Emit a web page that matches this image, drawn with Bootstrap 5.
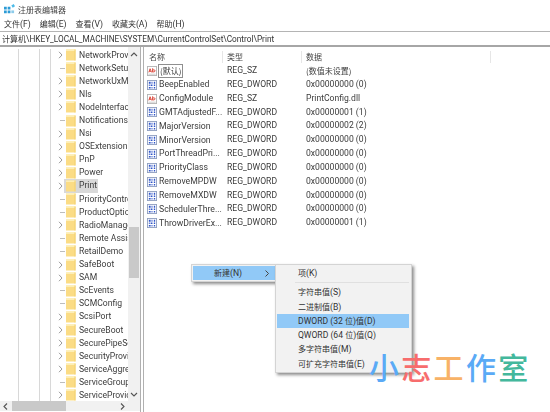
<!DOCTYPE html>
<html lang="zh"><head><meta charset="utf-8"><title>注册表编辑器</title>
<link href="https://cdn.jsdelivr.net/npm/bootstrap@5.3.0/dist/css/bootstrap.min.css" rel="stylesheet">
<style>
html,body{width:550px;height:412px;overflow:hidden;background:#fff}
body{font-family:Roboto,"Noto Sans CJK SC",sans-serif;font-size:8.6px;line-height:13px;color:#333;position:relative}
.zh{font-family:"Noto Sans CJK SC",sans-serif;font-size:8px}
.win-shell{width:550px;height:412px;filter:blur(.3px)}
.title-row{height:18px;padding:1px 0 0 4px;gap:3px;color:#444}
.menu-row{height:14px;padding:1px 0 0 4px;gap:9px;margin-top:-1px;color:#333}
.addr-row{height:16px;margin-top:1px;border-top:1px solid #b4b4b4;border-bottom:2px solid #a6a6a6;padding-left:2px;padding-top:1px;font-size:8.25px;line-height:12px;white-space:nowrap;overflow:hidden;color:#333}
.main-row{height:365px}
.tree-pane{width:141px;height:365px;border-right:1px solid #b0b0b0}
.tree-body{height:354px}
.tree-view{width:129px;overflow:hidden;padding-top:1.5px}
.guide-a{width:19px;border-right:1px solid #d8d8d8;flex:none}
.guide-b{width:21px;border-right:1px solid #d8d8d8;flex:none}
.guide-c{width:11px;border-right:1px solid #d8d8d8;flex:none}
.tree-list{width:78px;flex:none;overflow:hidden}
.tree-item{height:13.1px;white-space:nowrap;line-height:13px;color:#3c3c3c;font-size:8.6px}
.tw{width:15px;flex:none;justify-content:center;align-items:center;display:flex;padding-left:4px}
.tw svg{display:block;flex:none}
.stub{width:5px;height:1px;background:#bdbdbd;margin-left:3px}
.fold{flex:none;margin-right:3px}
.tree-item.sel{background:linear-gradient(90deg,transparent 13px,#d9d9d9 13px,#d9d9d9 47px,transparent 47px)}
.vbar{width:12px;background:#f1f1f1;flex:none;position:relative}
.v-thumb{position:absolute;left:1px;right:1px;top:180px;height:51px;background:#c9c9c9}
.v-up{position:absolute;left:2px;top:5px}.v-down{position:absolute;left:2px;bottom:4px}
.hbar{height:10px;background:#f1f1f1;padding:0 0 0 12px;position:relative}
.h-thumb{width:54px;background:#c9c9c9}
.h-left{position:absolute;left:3px;top:2px}.h-right{position:absolute;right:15px;top:2px}
.list-pane{margin-left:2px;border-left:1px solid #b0b0b0;flex:1}
.hdr-row{height:17px;padding-top:4px}
.hd{flex:none;padding-left:4px;border-right:1px solid #e6e6e6;height:12px;color:#444;line-height:12px}
.c-name{width:79px;padding-left:5px}.c-type{width:79px}.c-data{width:189px}
.val-row{height:13.85px;white-space:nowrap;line-height:13px;color:#3c3c3c}
.nm{width:83px;flex:none;padding-left:3px;gap:2px;align-items:center;display:flex;font-size:8.7px}
.nm svg{flex:none}
.tp{width:79px;flex:none}
.edit-box{border:1px solid #8f8f8f;padding:0 1px;line-height:11px;margin-left:-1px;background:#fff}
.pop-one,.pop-two{position:absolute;background:#f2f2f2;border:1px solid #d4d4d4;box-shadow:2px 2px 3px rgba(0,0,0,.45);color:#333}
.pop-one{left:191px;top:264px;width:85px;height:18px;padding:1px 0 1px 1px}
.pop-hot{background:#91c9f7;height:14px;padding:0 6px 0 21px;line-height:14px}
.pop-two{left:275px;top:264px;width:137px;height:109px;padding:0 2px 0 1px}
.pop-row{height:14.3px;padding-left:21px;line-height:14px;white-space:nowrap}
.pop-row.hot{background:#91c9f7}
.pop-gap{height:1px;background:#e0e0e0;margin:2px 0 2px 18px}
.pop-first{margin-top:1px}
.mark-text{position:absolute;left:369px;top:347px;display:flex;gap:2.3px;font:500 30px/38px "Noto Sans CJK SC",sans-serif}
.wm-blue{color:#5aaaf6}.wm-red{color:#f76d6d}.wm-orange{color:#f8b267}.wm-green{color:#43b89c}
</style></head><body>
<svg width="0" height="0" class="d-block" style="position:absolute"><defs>
<symbol id="fo" viewBox="0 0 10 12"><path d="M0 .5h9.500v11H0z" fill="#fbdc85"/><path d="M0 .5h9.500v1.500H0z" fill="#fdeeb5"/><path d="M8.500.5h1v11h-1z" fill="#f1cf70"/></symbol>
<symbol id="ch" viewBox="0 0 5 8"><path d="M1 .8 4 4 1 7.200" fill="none" stroke="#9a9a9a" stroke-width="1"/></symbol>
<symbol id="ab" viewBox="0 0 11 11"><rect x=".5" y=".5" width="10" height="10" fill="#fff" stroke="#b4b4b4"/><path d="M2 7l1.400-4L5 7M2.500 5.800h2" fill="none" stroke="#d83c2e"/><path d="M6.200 2.500V7M6.200 5c.4-1.200 2.600-1.200 2.600.3S6.600 6.800 6.200 5.800" fill="none" stroke="#d83c2e"/><path d="M1.500 9h8" stroke="#c8c8c8"/></symbol>
<symbol id="bi" viewBox="0 0 11 11"><rect x=".5" y=".5" width="10" height="10" fill="#fff" stroke="#8f9fc0"/><path d="M2 2h2v2H2zM5 2h1v2H5zM7.500 2h1.500v2H7.500zM2 5h1v1.500H2zM4 5h2v1.500H4zM7.500 5h1.500v1.500H7.500zM2 7.800h2v1.500H2zM5 7.800h1v1.500H5zM7.500 7.800h1.500v1.500H7.500z" fill="#2f55c8"/></symbol>
<symbol id="app" viewBox="0 0 12 12"><path d="M0 3h3v3H0zM0 7h3v3H0zM4 3h3v3H4zM4 7h3v3H4z" fill="#2c9bd6"/><path d="M8 1.500 10.500 0 12 2.500 9.500 4z" fill="#4dbbe8"/><path d="M8 7h3v3H8z" fill="#8ccbea"/></symbol>
</defs></svg>
<div class="win-shell d-flex flex-column">
 <div class="title-row d-flex align-items-center"><svg width="11" height="11"><use href="#app"/></svg><span class="zh">注册表编辑器</span></div>
 <div class="menu-row d-flex align-items-center"><span><span class="zh">文件</span>(F)</span><span><span class="zh">编辑</span>(E)</span><span><span class="zh">查看</span>(V)</span><span><span class="zh">收藏夹</span>(A)</span><span><span class="zh">帮助</span>(H)</span></div>
 <div class="addr-row"><span class="zh">计算机</span>\HKEY_LOCAL_MACHINE\SYSTEM\CurrentControlSet\Control\Print</div>
 <div class="main-row d-flex">
  <div class="tree-pane d-flex flex-column">
   <div class="tree-body d-flex">
    <div class="tree-view d-flex">
     <div class="guide-a"></div><div class="guide-b"></div><div class="guide-c"></div>
     <div class="tree-list">
<div class="tree-item d-flex align-items-center"><span class="tw"><svg width="5" height="8"><use href="#ch"/></svg></span><svg class="fold" width="10" height="12"><use href="#fo"/></svg>NetworkProvider</div>
<div class="tree-item d-flex align-items-center"><span class="tw"><i class="stub"></i></span><svg class="fold" width="10" height="12"><use href="#fo"/></svg>NetworkSetup2</div>
<div class="tree-item d-flex align-items-center"><span class="tw"><svg width="5" height="8"><use href="#ch"/></svg></span><svg class="fold" width="10" height="12"><use href="#fo"/></svg>NetworkUxManager</div>
<div class="tree-item d-flex align-items-center"><span class="tw"><svg width="5" height="8"><use href="#ch"/></svg></span><svg class="fold" width="10" height="12"><use href="#fo"/></svg>Nls</div>
<div class="tree-item d-flex align-items-center"><span class="tw"><svg width="5" height="8"><use href="#ch"/></svg></span><svg class="fold" width="10" height="12"><use href="#fo"/></svg>NodeInterfaces</div>
<div class="tree-item d-flex align-items-center"><span class="tw"><i class="stub"></i></span><svg class="fold" width="10" height="12"><use href="#fo"/></svg>Notifications</div>
<div class="tree-item d-flex align-items-center"><span class="tw"><svg width="5" height="8"><use href="#ch"/></svg></span><svg class="fold" width="10" height="12"><use href="#fo"/></svg>Nsi</div>
<div class="tree-item d-flex align-items-center"><span class="tw"><svg width="5" height="8"><use href="#ch"/></svg></span><svg class="fold" width="10" height="12"><use href="#fo"/></svg>OSExtensionDatabase</div>
<div class="tree-item d-flex align-items-center"><span class="tw"><svg width="5" height="8"><use href="#ch"/></svg></span><svg class="fold" width="10" height="12"><use href="#fo"/></svg>PnP</div>
<div class="tree-item d-flex align-items-center"><span class="tw"><svg width="5" height="8"><use href="#ch"/></svg></span><svg class="fold" width="10" height="12"><use href="#fo"/></svg>Power</div>
<div class="tree-item sel d-flex align-items-center"><span class="tw"><svg width="5" height="8"><use href="#ch"/></svg></span><svg class="fold" width="10" height="12"><use href="#fo"/></svg>Print</div>
<div class="tree-item d-flex align-items-center"><span class="tw"><i class="stub"></i></span><svg class="fold" width="10" height="12"><use href="#fo"/></svg>PriorityControl</div>
<div class="tree-item d-flex align-items-center"><span class="tw"><i class="stub"></i></span><svg class="fold" width="10" height="12"><use href="#fo"/></svg>ProductOptions</div>
<div class="tree-item d-flex align-items-center"><span class="tw"><svg width="5" height="8"><use href="#ch"/></svg></span><svg class="fold" width="10" height="12"><use href="#fo"/></svg>RadioManagement</div>
<div class="tree-item d-flex align-items-center"><span class="tw"><i class="stub"></i></span><svg class="fold" width="10" height="12"><use href="#fo"/></svg>Remote Assistance</div>
<div class="tree-item d-flex align-items-center"><span class="tw"><i class="stub"></i></span><svg class="fold" width="10" height="12"><use href="#fo"/></svg>RetailDemo</div>
<div class="tree-item d-flex align-items-center"><span class="tw"><svg width="5" height="8"><use href="#ch"/></svg></span><svg class="fold" width="10" height="12"><use href="#fo"/></svg>SafeBoot</div>
<div class="tree-item d-flex align-items-center"><span class="tw"><svg width="5" height="8"><use href="#ch"/></svg></span><svg class="fold" width="10" height="12"><use href="#fo"/></svg>SAM</div>
<div class="tree-item d-flex align-items-center"><span class="tw"><i class="stub"></i></span><svg class="fold" width="10" height="12"><use href="#fo"/></svg>ScEvents</div>
<div class="tree-item d-flex align-items-center"><span class="tw"><i class="stub"></i></span><svg class="fold" width="10" height="12"><use href="#fo"/></svg>SCMConfig</div>
<div class="tree-item d-flex align-items-center"><span class="tw"><svg width="5" height="8"><use href="#ch"/></svg></span><svg class="fold" width="10" height="12"><use href="#fo"/></svg>ScsiPort</div>
<div class="tree-item d-flex align-items-center"><span class="tw"><svg width="5" height="8"><use href="#ch"/></svg></span><svg class="fold" width="10" height="12"><use href="#fo"/></svg>SecureBoot</div>
<div class="tree-item d-flex align-items-center"><span class="tw"><svg width="5" height="8"><use href="#ch"/></svg></span><svg class="fold" width="10" height="12"><use href="#fo"/></svg>SecurePipeServers</div>
<div class="tree-item d-flex align-items-center"><span class="tw"><svg width="5" height="8"><use href="#ch"/></svg></span><svg class="fold" width="10" height="12"><use href="#fo"/></svg>SecurityProviders</div>
<div class="tree-item d-flex align-items-center"><span class="tw"><svg width="5" height="8"><use href="#ch"/></svg></span><svg class="fold" width="10" height="12"><use href="#fo"/></svg>ServiceAggregated</div>
<div class="tree-item d-flex align-items-center"><span class="tw"><i class="stub"></i></span><svg class="fold" width="10" height="12"><use href="#fo"/></svg>ServiceGroupOrder</div>
<div class="tree-item d-flex align-items-center"><span class="tw"><svg width="5" height="8"><use href="#ch"/></svg></span><svg class="fold" width="10" height="12"><use href="#fo"/></svg>ServiceProvider</div>
     </div>
    </div>
    <div class="vbar">
     <svg class="v-up" width="8" height="5" viewBox="0 0 8 5"><path d="M1 4 4 1l3 3" fill="none" stroke="#555" stroke-width="1.100"/></svg>
     <div class="v-thumb"></div>
     <svg class="v-down" width="8" height="5" viewBox="0 0 8 5"><path d="M1 1l3 3 3-3" fill="none" stroke="#555" stroke-width="1.100"/></svg>
    </div>
   </div>
   <div class="hbar d-flex">
    <svg class="h-left" width="5" height="7" viewBox="0 0 5 7"><path d="M4 .5 1 3.500l3 3" fill="none" stroke="#555" stroke-width="1.100"/></svg>
    <div class="h-thumb"></div>
    <svg class="h-right" width="5" height="7" viewBox="0 0 5 7"><path d="M1 .5l3 3-3 3" fill="none" stroke="#555" stroke-width="1.100"/></svg>
   </div>
  </div>
  <div class="list-pane">
   <div class="hdr-row d-flex"><div class="hd c-name zh">名称</div><div class="hd c-type zh">类型</div><div class="hd c-data zh">数据</div></div>
   <div class="val-row d-flex"><div class="nm"><svg width="10" height="10"><use href="#ab"/></svg><span class="edit-box"><span class="zh">(默认)</span></span></div><div class="tp">REG_SZ</div><div class="zh">(数值未设置)</div></div>
   <div class="val-row d-flex"><div class="nm"><svg width="10" height="10"><use href="#bi"/></svg>BeepEnabled</div><div class="tp">REG_DWORD</div><div>0x00000000 (0)</div></div>
   <div class="val-row d-flex"><div class="nm"><svg width="10" height="10"><use href="#ab"/></svg>ConfigModule</div><div class="tp">REG_SZ</div><div>PrintConfig.dll</div></div>
   <div class="val-row d-flex"><div class="nm"><svg width="10" height="10"><use href="#bi"/></svg>GMTAdjustedF...</div><div class="tp">REG_DWORD</div><div>0x00000001 (1)</div></div>
   <div class="val-row d-flex"><div class="nm"><svg width="10" height="10"><use href="#bi"/></svg>MajorVersion</div><div class="tp">REG_DWORD</div><div>0x00000002 (2)</div></div>
   <div class="val-row d-flex"><div class="nm"><svg width="10" height="10"><use href="#bi"/></svg>MinorVersion</div><div class="tp">REG_DWORD</div><div>0x00000000 (0)</div></div>
   <div class="val-row d-flex"><div class="nm"><svg width="10" height="10"><use href="#bi"/></svg>PortThreadPri...</div><div class="tp">REG_DWORD</div><div>0x00000000 (0)</div></div>
   <div class="val-row d-flex"><div class="nm"><svg width="10" height="10"><use href="#bi"/></svg>PriorityClass</div><div class="tp">REG_DWORD</div><div>0x00000000 (0)</div></div>
   <div class="val-row d-flex"><div class="nm"><svg width="10" height="10"><use href="#bi"/></svg>RemoveMPDW</div><div class="tp">REG_DWORD</div><div>0x00000000 (0)</div></div>
   <div class="val-row d-flex"><div class="nm"><svg width="10" height="10"><use href="#bi"/></svg>RemoveMXDW</div><div class="tp">REG_DWORD</div><div>0x00000000 (0)</div></div>
   <div class="val-row d-flex"><div class="nm"><svg width="10" height="10"><use href="#bi"/></svg>SchedulerThre...</div><div class="tp">REG_DWORD</div><div>0x00000000 (0)</div></div>
   <div class="val-row d-flex"><div class="nm"><svg width="10" height="10"><use href="#bi"/></svg>ThrowDriverEx...</div><div class="tp">REG_DWORD</div><div>0x00000001 (1)</div></div>
  </div>
 </div>
</div>
<div class="pop-one"><div class="pop-hot d-flex justify-content-between align-items-center"><span><span class="zh">新建</span>(N)</span><svg width="4" height="7" viewBox="0 0 4 7"><path d="M.5.500 3.500 3.500.5 6.500" fill="none" stroke="#444"/></svg></div></div>
<div class="pop-two">
 <div class="pop-row pop-first"><span class="zh">项</span>(K)</div>
 <div class="pop-gap"></div>
 <div class="pop-row"><span class="zh">字符串值</span>(S)</div>
 <div class="pop-row"><span class="zh">二进制值</span>(B)</div>
 <div class="pop-row hot">DWORD (32 <span class="zh">位</span>)<span class="zh">值</span>(D)</div>
 <div class="pop-row">QWORD (64 <span class="zh">位</span>)<span class="zh">值</span>(Q)</div>
 <div class="pop-row"><span class="zh">多字符串值</span>(M)</div>
 <div class="pop-row"><span class="zh">可扩充字符串值</span>(E)</div>
</div>
<div class="mark-text"><span class="wm-blue">小</span><span class="wm-red">志</span><span class="wm-orange">工</span><span class="wm-blue">作</span><span class="wm-green">室</span></div>
<script src="https://cdn.jsdelivr.net/npm/bootstrap@5.3.0/dist/js/bootstrap.bundle.min.js"></script>
</body></html>
